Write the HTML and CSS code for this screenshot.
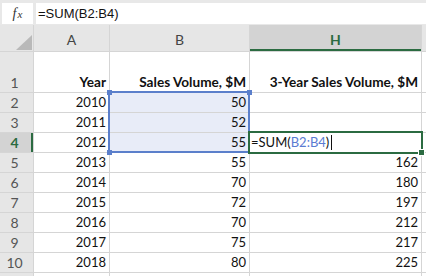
FILE: index.html
```html
<!DOCTYPE html>
<html>
<head>
<meta charset="utf-8">
<link rel="stylesheet" href="styles.css">
</head>
<body>
<div class="formula-bar">
  <div class="fx">f<span class="x">x</span></div>
  <div class="input">=SUM(B2:B4)</div>
</div>
<div class="sheet">
  <div class="grid">
    <div class="hd corner"><svg width="16" height="15" viewBox="0 0 16 15"><polygon points="16,0 16,15 0,15" fill="#b9b9b9"/></svg></div>
    <div class="hd col">A</div>
    <div class="hd col">B</div>
    <div class="hd col active-col">H</div>
    <div class="hd col"></div>

    <div class="hd row r1">1</div>
    <div class="c r1 num b">Year</div>
    <div class="c r1 num b">Sales Volume, $M</div>
    <div class="c r1 num b">3-Year Sales Volume, $M</div>
    <div class="c"></div>

    <div class="hd row">2</div>
    <div class="c num">2010</div>
    <div class="c num sel">50</div>
    <div class="c num"></div>
    <div class="c"></div>

    <div class="hd row">3</div>
    <div class="c num">2011</div>
    <div class="c num sel">52</div>
    <div class="c num"></div>
    <div class="c"></div>

    <div class="hd row active-row">4</div>
    <div class="c num">2012</div>
    <div class="c num sel">55</div>
    <div class="c edit">=SUM(<span class="ref">B2:B4</span>)<span class="caret"></span></div>
    <div class="c"></div>

    <div class="hd row">5</div>
    <div class="c num">2013</div>
    <div class="c num">55</div>
    <div class="c num">162</div>
    <div class="c"></div>

    <div class="hd row">6</div>
    <div class="c num">2014</div>
    <div class="c num">70</div>
    <div class="c num">180</div>
    <div class="c"></div>

    <div class="hd row">7</div>
    <div class="c num">2015</div>
    <div class="c num">72</div>
    <div class="c num">197</div>
    <div class="c"></div>

    <div class="hd row">8</div>
    <div class="c num">2016</div>
    <div class="c num">70</div>
    <div class="c num">212</div>
    <div class="c"></div>

    <div class="hd row">9</div>
    <div class="c num">2017</div>
    <div class="c num">75</div>
    <div class="c num">217</div>
    <div class="c"></div>

    <div class="hd row">10</div>
    <div class="c num">2018</div>
    <div class="c num">80</div>
    <div class="c num">225</div>
    <div class="c"></div>

    <div class="hd row"></div>
    <div class="c"></div>
    <div class="c"></div>
    <div class="c"></div>
    <div class="c"></div>
  </div>
  <div class="range"><span class="h tl"></span><span class="h tr"></span><span class="h bl"></span></div>
  <div class="active-cell"><span class="gh"></span></div>
</div>
</body>
</html>
```

FILE: styles.css
```css
html, body {
  margin: 0;
  padding: 0;
  background: #ffffff;
  overflow: hidden;
  width: 426px;
  height: 276px;
}

.formula-bar {
  display: flex;
  align-items: stretch;
  gap: 3px;
  height: 25px;
  box-sizing: border-box;
  padding: 3px 0 1px 2px;
  background: #e8e8e8;
}

.fx {
  width: 31px;
  background: #fff;
  font-family: "Liberation Serif", serif;
  font-style: italic;
  font-size: 14px;
  color: #333;
  display: flex;
  align-items: center;
  justify-content: center;
  padding-top: 1px;
  box-sizing: border-box;
}

.fx .x {
  font-size: 11px;
  margin-left: 1px;
}

.input {
  flex: 1;
  background: #fff;
  font-family: "Liberation Sans", Arial, sans-serif;
  font-size: 13px;
  color: #111;
  line-height: 21px;
  padding-left: 2px;
}

.sheet {
  position: relative;
  height: 251px;
  overflow: hidden;
}

.grid {
  display: grid;
  grid-template-columns: 33px 75px 139px 171px 1fr;
  grid-template-rows: 26px 40px repeat(9, 19px) 3px;
  gap: 1px;
  background: #d5d5d5;
  font-family: "Lato", "Open Sans", sans-serif;
  font-size: 13px;
  color: #111;
}

.hd {
  background: #e6e6e6;
  color: #444;
  font-size: 14px;
  display: flex;
  justify-content: center;
}

.hd.col {
  align-items: flex-end;
  padding-bottom: 3px;
  line-height: 17px;
  box-sizing: border-box;
}

.hd.corner {
  align-items: flex-end;
  justify-content: flex-end;
  padding: 0 1px 1px 0;
}

.hd.corner svg {
  display: block;
}

.hd.row {
  align-items: flex-end;
  line-height: 19px;
  padding-right: 4px;
  color: #555;
}

.active-col {
  background: #d3d3d3;
  color: #2b6b41;
  font-weight: bold;
  box-shadow: inset 0 -2px 0 #2b6b41;
}

.active-row {
  background: #d3d3d3;
  color: #2b6b41 !important;
  font-weight: bold;
  box-shadow: inset -2px 0 0 #2b6b41;
}

.c {
  background: #fff;
  line-height: 19px;
  display: flex;
  align-items: flex-end;
  white-space: nowrap;
}

.num {
  justify-content: flex-end;
  padding-right: 3px;
}

.b {
  font-weight: bold;
  font-size: 13.6px;
}

.sel {
  background: #e8ecf8;
}

.edit {
  padding-left: 1px;
}

.ref {
  color: #5a7bd2;
}

.caret {
  display: inline-block;
  width: 1px;
  height: 15px;
  background: #111;
  margin-left: 2px;
  align-self: center;
}

.range {
  position: absolute;
  left: 108px;
  top: 66px;
  width: 142px;
  height: 62px;
  box-sizing: border-box;
  border: 2px solid #5b7fcb;
}

.range .h {
  position: absolute;
  width: 5px;
  height: 5px;
  background: #5b7fcb;
}

.range .tl { left: -3.5px; top: -3.5px; }
.range .tr { right: -3.5px; top: -3.5px; }
.range .bl { left: -3.5px; bottom: -3.5px; }

.active-cell {
  position: absolute;
  left: 248px;
  top: 106px;
  width: 175px;
  height: 23px;
  box-sizing: border-box;
  border: 2px solid #2b6b41;
}

.active-cell .gh {
  position: absolute;
  right: -4px;
  bottom: -4px;
  width: 5px;
  height: 5px;
  background: #2b6b41;
  border: 1px solid #fff;
}
```
